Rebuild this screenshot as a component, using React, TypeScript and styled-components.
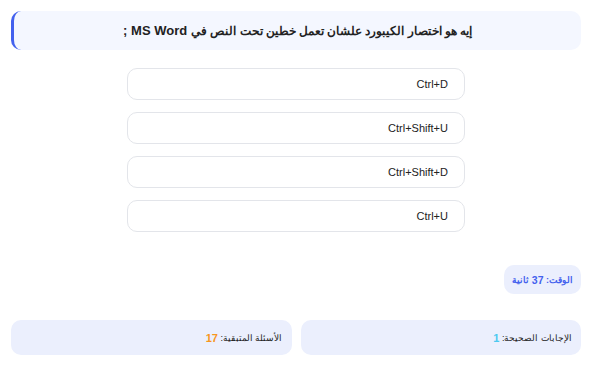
import styled, { createGlobalStyle } from "styled-components";

const GlobalStyle = createGlobalStyle`
  html, body {
    margin: 0;
    padding: 0;
    background: #ffffff;
  }
  body {
    font-family: "Liberation Sans", Arial, sans-serif;
    color: #222222;
  }
`;

const Page = styled.div`
  direction: rtl;
  padding: 11px 11px 0;
  display: flex;
  flex-direction: column;
`;

const QuestionCard = styled.div`
  height: 39px;
  display: flex;
  align-items: center;
  justify-content: center;
  gap: 4px;
  background: #f4f7ff;
  border-radius: 10px;
  border-left: 3px solid #4361ee;
  font-size: 11.5px;
  font-weight: 700;
  color: #222222;
`;

const Latin = styled.span`
  font-size: 13px;
`;

const Options = styled.div`
  width: 338px;
  margin: 18px auto 0;
  display: flex;
  flex-direction: column;
  gap: 12px;
`;

const Option = styled.button`
  height: 32px;
  box-sizing: border-box;
  display: flex;
  align-items: center;
  justify-content: flex-end;
  padding: 0 16px;
  background: #ffffff;
  border: 1px solid #e3e5ea;
  border-radius: 10px;
  font-family: inherit;
  font-size: 11px;
  color: #222222;
  direction: ltr;
  cursor: pointer;
`;

const Timer = styled.div`
  align-self: flex-start;
  margin-top: 33px;
  height: 29px;
  display: flex;
  align-items: center;
  padding: 0 8px;
  background: #ebeffd;
  border-radius: 10px;
  color: #4361ee;
  font-size: 9px;
  font-weight: 700;
`;

const TimerValue = styled.span`
  font-size: 10.5px;
`;

const Stats = styled.div`
  margin-top: 26px;
  display: grid;
  grid-template-columns: 1fr 1fr;
  gap: 9px;
`;

const StatBox = styled.div`
  height: 35px;
  display: flex;
  align-items: center;
  padding: 0 9px;
  background: #ebeffd;
  border-radius: 10px;
  font-size: 9px;
  color: #222222;
`;

const StatValue = styled.span<{ $color: string }>`
  color: ${(p) => p.$color};
  font-weight: 700;
  font-size: 11px;
`;

const options = ["Ctrl+D", "Ctrl+Shift+U", "Ctrl+Shift+D", "Ctrl+U"];

export default function App() {
  return (
    <>
      <GlobalStyle />
      <Page>
        <QuestionCard>
          <span>إيه هو اختصار الكيبورد علشان تعمل خطين تحت النص في</span>
          <Latin>MS Word ;</Latin>
        </QuestionCard>
        <Options>
          {options.map((o) => (
            <Option key={o}>{o}</Option>
          ))}
        </Options>
        <Timer>
          الوقت:&nbsp;<TimerValue>37</TimerValue>&nbsp;ثانية
        </Timer>
        <Stats>
          <StatBox>
            الإجابات الصحيحة:&nbsp;<StatValue $color="#4cc9f0">1</StatValue>
          </StatBox>
          <StatBox>
            الأسئلة المتبقية:&nbsp;<StatValue $color="#f8961e">17</StatValue>
          </StatBox>
        </Stats>
      </Page>
    </>
  );
}
